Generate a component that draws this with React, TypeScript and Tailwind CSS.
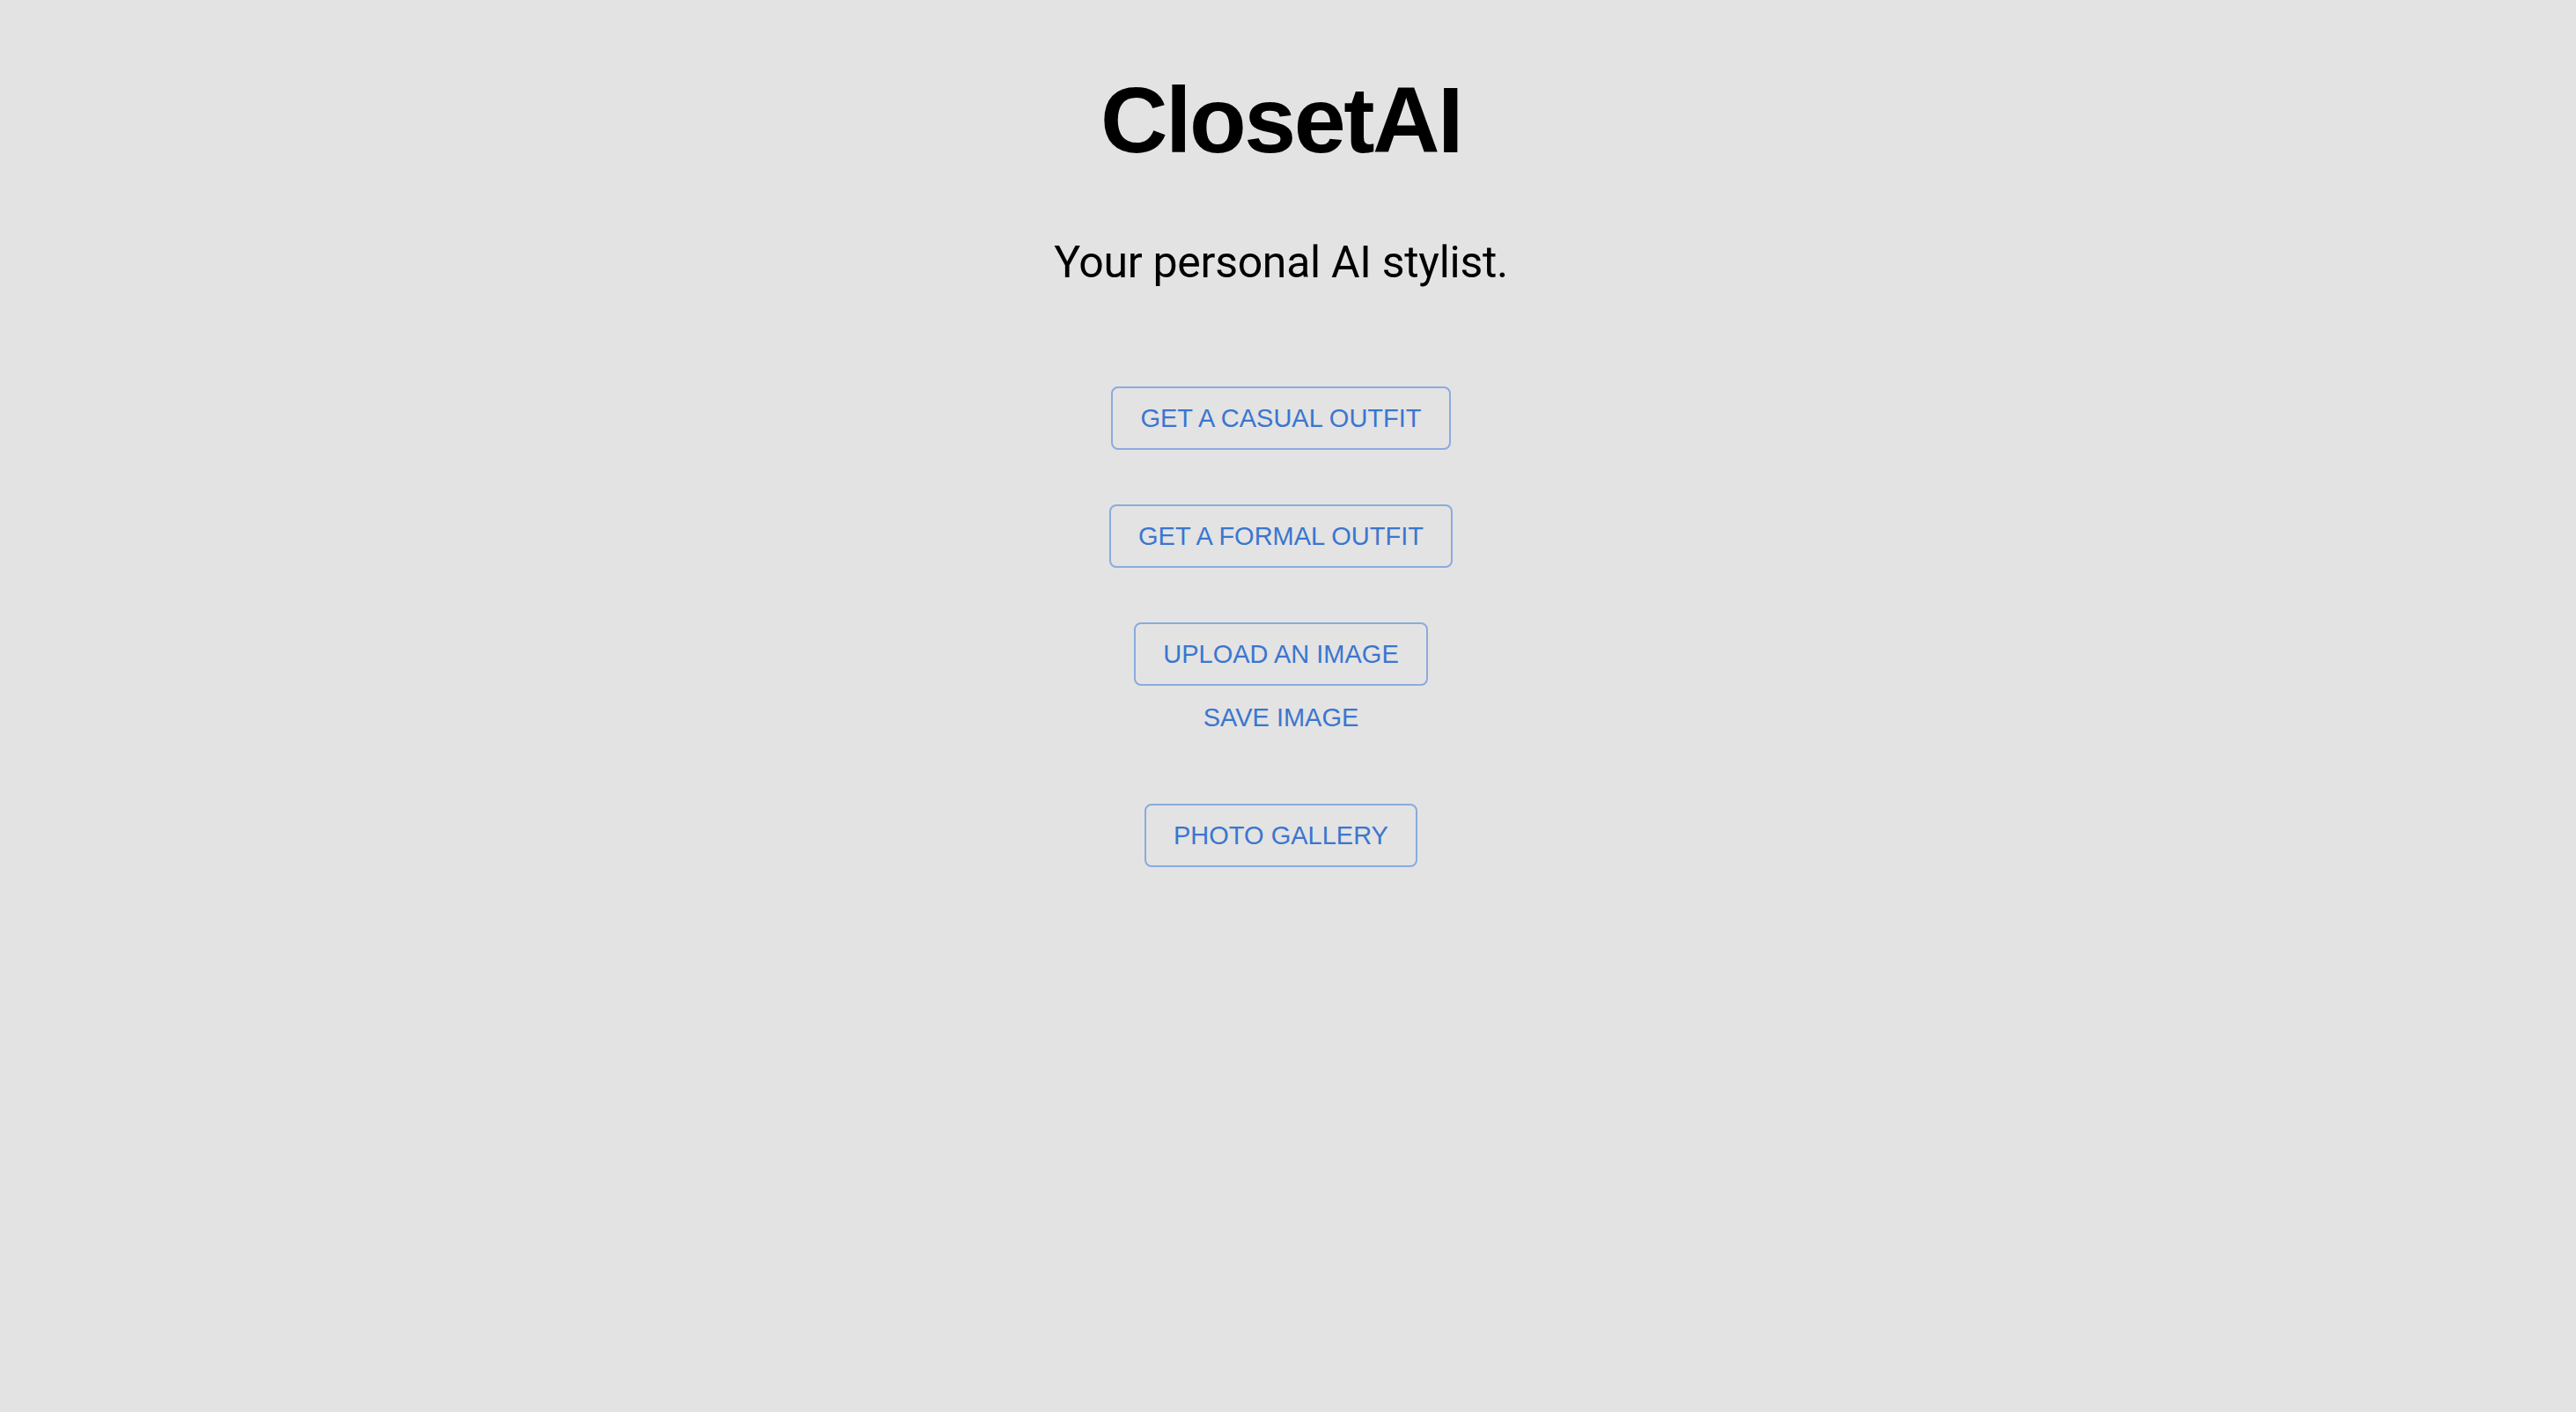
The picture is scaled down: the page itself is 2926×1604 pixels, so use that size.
import React from "react";

const outlined =
  "h-[72px] flex items-center justify-center px-[31px] border-2 border-[#8aabde] rounded-[8px] text-[#3a76d0] text-[29px] leading-none uppercase whitespace-nowrap bg-transparent";

export default function App() {
  return (
    <main
      className="min-h-screen bg-[#e3e3e3] flex flex-col items-center pt-[83px] pr-4"
      style={{ fontFamily: '"Liberation Sans", Arial, sans-serif' }}
    >
      <h1
        className="text-[106px] leading-none font-bold tracking-[-2.5px] text-black m-0"
        style={{ fontFamily: '"Liberation Sans", Arial, sans-serif' }}
      >
        ClosetAI
      </h1>
      <p
        className="mt-[84px] text-[50px] leading-none tracking-[-0.3px] text-black"
        style={{ fontFamily: 'Roboto, "Liberation Sans", sans-serif' }}
      >
        Your personal AI stylist.
      </p>
      <div className="mt-[116px] flex flex-col items-center gap-[62px]">
        <button className={outlined}>Get a casual outfit</button>
        <button className={outlined}>Get a formal outfit</button>
        <div className="flex flex-col items-center">
          <button className={outlined}>Upload an image</button>
          <button className="h-[72px] flex items-center justify-center px-[16px] text-[#3a76d0] text-[29px] leading-none uppercase whitespace-nowrap bg-transparent">
            Save image
          </button>
        </div>
        <button className={outlined}>Photo gallery</button>
      </div>
    </main>
  );
}
